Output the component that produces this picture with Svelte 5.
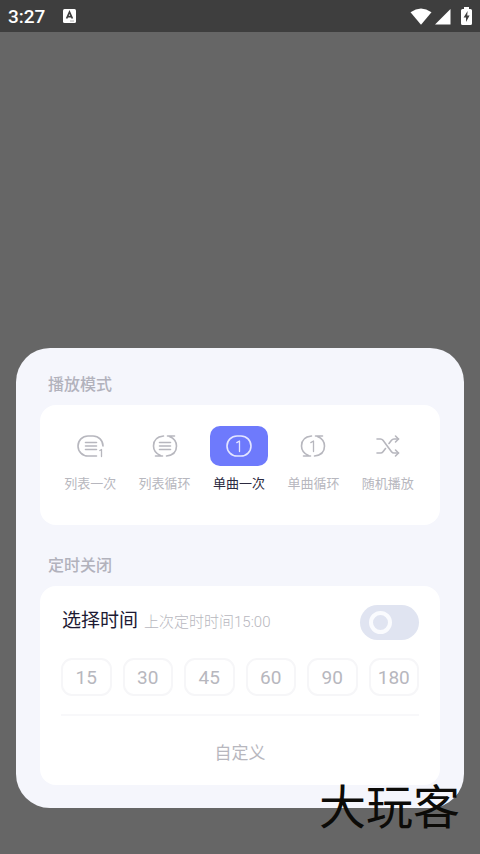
<script lang="ts">
  const modes = [
    { id: 'list-once', label: '列表一次' },
    { id: 'list-loop', label: '列表循环' },
    { id: 'single-once', label: '单曲一次' },
    { id: 'single-loop', label: '单曲循环' },
    { id: 'shuffle', label: '随机播放' },
  ];
  const minutes = [15, 30, 45, 60, 90, 180];

  let mode = $state('single-once');
  let timerOn = $state(false);
  let selected = $state(0);

  function pick(value: number) {
    selected = value;
    timerOn = true;
  }
</script>

<div class="screen">
  <header class="status">
    <span class="clock">3:27</span>
    <svg class="app-icon" width="14" height="14" viewBox="0 0 14 14">
      <rect width="13" height="14" rx="1.5" fill="#fff" />
      <path d="M3.6 9.5 6.5 3l2.9 6.5M4.6 7.6h3.8" fill="none" stroke="#3e3e3e" stroke-width="1.7" />
      <path d="M7 12h4" stroke="#999" stroke-width="0.8" />
    </svg>
    <div class="signals">
      <svg width="22" height="17" viewBox="0 0 22 17">
        <path d="M0.5 4.2Q11-3.2 21.5 4.2L11 16.8Z" fill="#fff" />
      </svg>
      <svg width="16" height="17" viewBox="0 0 16 17">
        <path d="M15.5 1v15.6H0Z" fill="#fff" />
      </svg>
      <svg class="battery" width="11" height="18" viewBox="0 0 11 18">
        <path d="M3 0h5v2h1.500q1.500 0 1.500 1.500v13q0 1.500-1.500 1.500h-8q-1.500 0-1.500-1.500v-13q0-1.500 1.500-1.500H3Z" fill="#fff" />
        <path d="M6.600 4 2.600 10.500h2.400v4.500l3.600-6.500H6.200Z" fill="#3e3e3e" />
      </svg>
    </div>
  </header>

  <main class="sheet">
    <h2>播放模式</h2>
    <section class="card modes">
      {#each modes as m}
        <button class="mode" class:active={mode === m.id} aria-pressed={mode === m.id} onclick={() => (mode = m.id)}>
          <span class="chip">
            <svg width="28" height="24" viewBox="0 0 28 24">
              {#if m.id === 'list-once'}
                <path d="M20.500 22H12a10 10 0 0 1 0-20h5a10 10 0 0 1 10 10" />
                <path d="M9.500 8.500h11M9.500 12h11M9.500 15.500h11" />
                <path d="M23.800 16.500 25.500 15.500v7" class="thin" />
              {:else if m.id === 'list-loop'}
                <path d="M12.500 2Q2.500 3 2.500 12q0 6.500 7 9.500M4.500 22h7" />
                <path d="M15.500 22Q25.500 21 25.500 12q0-6.500-7-9.500M23.500 2h-7" />
                <path d="M8.500 8.500h11M8.500 12h11M8.500 15.500h11" />
              {:else if m.id === 'single-once'}
                <rect x="2" y="2" width="24" height="20" rx="10" />
                <path d="M11.800 8.600 14.500 7v10.500" class="thin" />
              {:else if m.id === 'single-loop'}
                <path d="M12.500 2Q2.500 3 2.500 12q0 6.500 7 9.500M4.500 22h7" />
                <path d="M15.500 22Q25.500 21 25.500 12q0-6.500-7-9.500M23.500 2h-7" />
                <path d="M11.800 8.600 14.500 7v10.500" class="thin" />
              {:else}
                <path d="M3 5h3.500q1.500 0 2.500 1.300l8.500 11.400q1 1.300 2.500 1.300h4.500" />
                <path d="M3 19h3.500q1.500 0 2.500-1.300l2.500-3.200M15 9.500l2.500-3.200q1-1.300 2.500-1.300h4.500" />
                <path d="m21.500 2 3 3-3 3M21.500 16l3 3-3 3" />
              {/if}
            </svg>
          </span>
          <span class="mode-label">{m.label}</span>
        </button>
      {/each}
    </section>

    <h2>定时关闭</h2>
    <section class="card timer">
      <div class="timer-head">
        <label for="timer">选择时间</label>
        <span class="last">上次定时时间15:00</span>
        <input id="timer" class="toggle" type="checkbox" role="switch" bind:checked={timerOn} />
      </div>
      <div class="minutes">
        {#each minutes as value}
          <button class:picked={selected === value} onclick={() => pick(value)}>{value}</button>
        {/each}
      </div>
      <button class="custom">自定义</button>
    </section>
  </main>

  <div class="watermark">大玩客</div>
</div>

<style>
  :global(body) {
    margin: 0;
  }

  .screen {
    position: relative;
    display: flex;
    flex-direction: column;
    min-height: 100vh;
    background: #666;
    font-family: Roboto, 'Noto Sans CJK SC', sans-serif;
    color: #b7b7be;
  }

  button {
    padding: 0;
    border: none;
    background: none;
    color: inherit;
    font-family: inherit;
    cursor: pointer;
  }

  .status {
    display: flex;
    align-items: center;
    box-sizing: border-box;
    height: 32px;
    padding: 0 8px;
    background: #3e3e3e;
    color: #fff;
  }

  .clock {
    font-size: 19px;
    font-weight: 500;
  }

  .app-icon {
    margin-left: 18px;
  }

  .signals {
    display: flex;
    align-items: center;
    gap: 3px;
    margin-left: auto;
  }

  .battery {
    margin-left: 7px;
  }

  .sheet {
    margin: auto 16px 46px;
    padding: 25px 24px 23px;
    border-radius: 34px;
    background: #f5f6fc;
  }

  h2 {
    margin: 0 8px 8px;
    color: #b2b2bc;
    font-size: 16px;
    font-weight: 500;
    line-height: 24px;
  }

  .card {
    border-radius: 16px;
    background: #fff;
  }

  .modes {
    display: flex;
    box-sizing: border-box;
    height: 120px;
    margin-bottom: 29px;
    padding: 21px 15px 21px 13px;
  }

  .mode {
    display: flex;
    flex: 1;
    flex-direction: column;
    align-items: center;
    gap: 9px;
  }

  .chip {
    display: flex;
    align-items: center;
    justify-content: center;
    width: 58px;
    height: 40px;
    border-radius: 10px;
  }

  .chip svg {
    fill: none;
    stroke: #b7b7be;
    stroke-width: 1.6;
    stroke-linecap: round;
    stroke-linejoin: round;
  }

  .chip .thin {
    stroke-width: 1.3;
  }

  .active .chip {
    background: #6e7afc;
  }

  .active svg {
    stroke: #e4e6ff;
  }

  .mode-label {
    font-size: 13px;
    line-height: 18px;
    white-space: nowrap;
  }

  .active .mode-label {
    color: #2c2a40;
  }

  .timer {
    padding: 18px 21px 0;
  }

  .timer-head {
    display: flex;
    align-items: center;
    height: 36px;
    padding-left: 1px;
  }

  .timer-head label {
    padding-bottom: 8px;
    color: #1d1a33;
    font-size: 19px;
  }

  .last {
    margin-left: 6px;
    padding-bottom: 3px;
    font-size: 15px;
    font-weight: 300;
  }

  .toggle {
    display: flex;
    align-items: center;
    width: 59px;
    height: 35px;
    margin: 0 0 0 auto;
    padding-left: 9px;
    box-sizing: border-box;
    border-radius: 18px;
    background: #e0e4f1;
    appearance: none;
    cursor: pointer;
  }

  .toggle::before {
    content: '';
    box-sizing: border-box;
    width: 23px;
    height: 23px;
    border: 4px solid #fafbfe;
    border-radius: 50%;
  }

  .toggle:checked {
    justify-content: flex-end;
    padding: 0 9px 0 0;
    background: #6e7afc;
  }

  .minutes {
    display: flex;
    gap: 11px;
    margin-top: 18px;
    padding-bottom: 18px;
    border-bottom: 2px solid #f8f8fa;
  }

  .minutes button {
    flex: 1;
    box-sizing: border-box;
    height: 38px;
    border: 2px solid #f6f6f8;
    border-radius: 11px;
    font-size: 19px;
  }

  .minutes .picked {
    border-color: #6e7afc;
    color: #6e7afc;
  }

  .custom {
    display: block;
    width: 100%;
    height: 69px;
    padding-top: 2px;
    font-size: 17px;
  }

  .watermark {
    position: absolute;
    right: 20px;
    bottom: 22px;
    color: #0c0b08;
    font-size: 47px;
    font-weight: 400;
    line-height: 48px;
    pointer-events: none;
  }
</style>
